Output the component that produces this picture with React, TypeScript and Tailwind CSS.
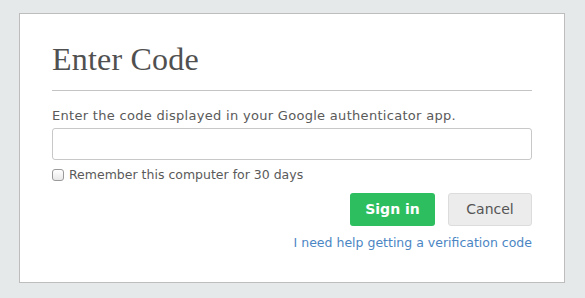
export default function App() {
  return (
    <div className="min-h-[298px] w-[585px] bg-[#e6e9e9] pt-[13px] pl-[19px]">
      <div className="w-[546px] h-[270px] border border-[#bdbdbd] bg-white px-[32px] pt-[25px]">
        <h1 className="font-['Liberation_Serif',serif] text-[32px] leading-[40px] font-normal text-[#505050] tracking-[0.2px]">
          Enter Code
        </h1>
        <div className="mt-[11px] h-px bg-[#c4c4c4]" />
        <form className="font-['DejaVu_Sans',sans-serif] text-[12.5px]">
          <p className="mt-[17px] text-[13px] leading-[16px] tracking-[0.3px] text-[#5a5a5a]">
            Enter the code displayed in your Google authenticator app.
          </p>
          <input
            type="text"
            className="mt-[4px] block h-[32px] w-full rounded-[3px] border border-[#c8c8c8] bg-white px-2 outline-none"
          />
          <label className="mt-[7px] flex items-center gap-[5px] leading-[16px] text-[#5a5a5a]">
            <span className="inline-block h-[12px] w-[12px] rounded-[3px] border border-[#9a9a9a] bg-gradient-to-b from-white to-[#e8e8e8]" />
            Remember this computer for 30 days
          </label>
          <div className="mt-[10px] flex justify-end gap-[13px]">
            <button
              type="button"
              className="h-[33px] w-[85px] rounded-[3px] bg-[#2dbe60] text-[14px] font-bold text-white"
            >
              Sign in
            </button>
            <button
              type="button"
              className="h-[33px] w-[84px] rounded-[3px] border border-[#dcdcdc] bg-[#ececec] text-[14px] text-[#555]"
            >
              Cancel
            </button>
          </div>
          <div className="mt-[9px] flex justify-end">
            <a href="#" className="leading-[16px] text-[#4b86c4]">
              I need help getting a verification code
            </a>
          </div>
        </form>
      </div>
    </div>
  );
}
